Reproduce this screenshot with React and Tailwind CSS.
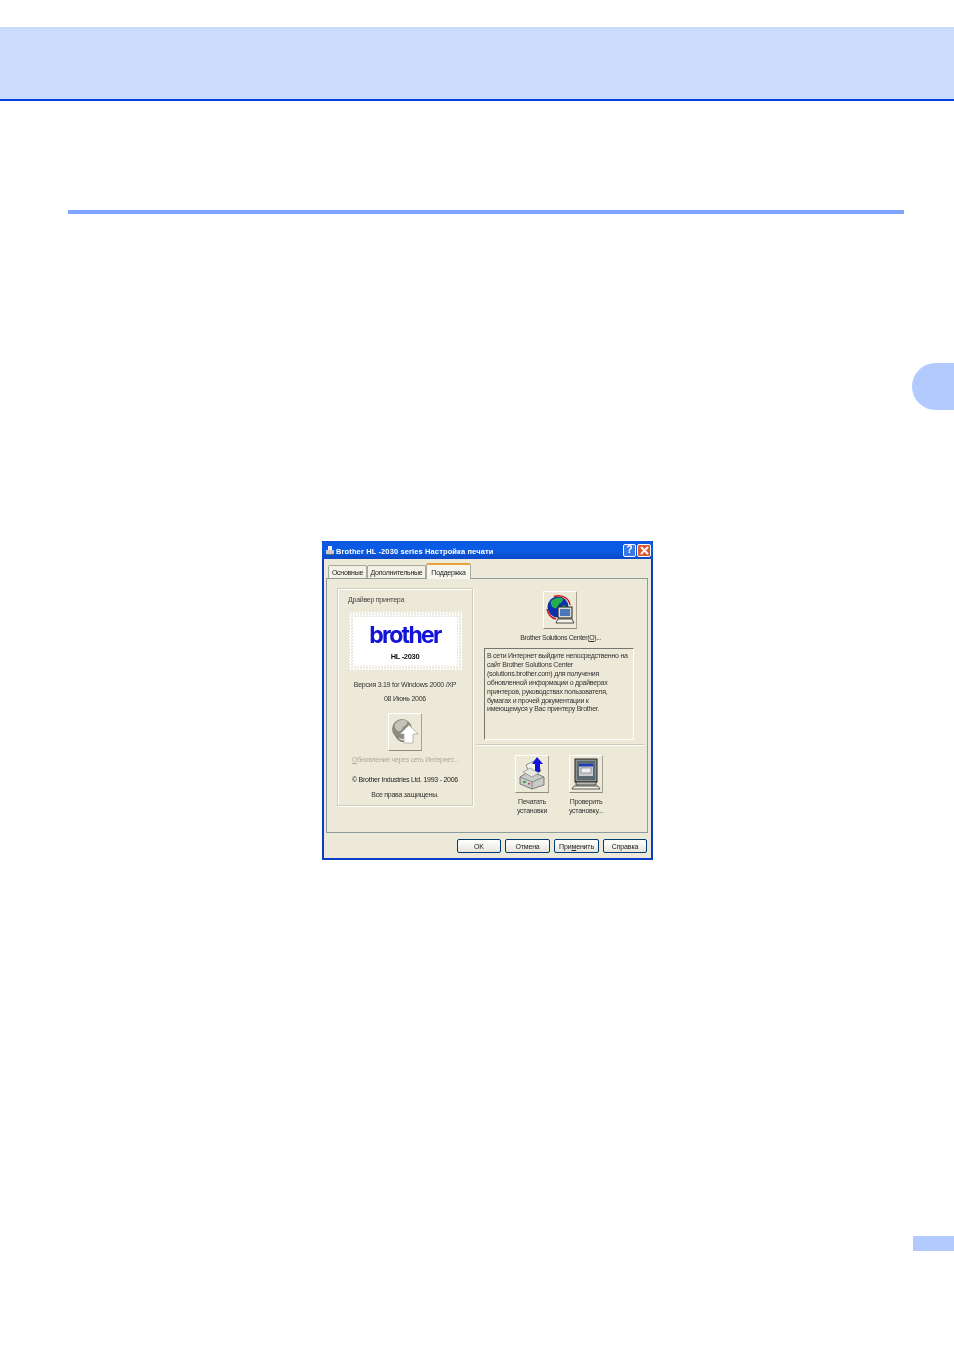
const FONT = "font-['Liberation_Sans',Arial,sans-serif]";

function IconButton({ children, className = "" }) {
  return (
    <div className={`flex h-[38px] w-[34px] items-center justify-center border border-t-white border-l-white border-r-[#a5a294] border-b-[#8f8c7e] bg-[#ece9d8] ${className}`}>
      {children}
    </div>
  );
}

function GlobeIcon() {
  return (
    <svg width="30" height="32" viewBox="0 0 30 32">
      <circle cx="13" cy="13" r="10.5" fill="#0f2fb0" />
      <path d="M6 7c3-3 7-4 11-3 2 2 0 5-3 6-1 3-3 5-5 4-2-1-4-4-3-7z" fill="#22b04a" />
      <path d="M17 12c3-1 5 0 6 2-1 3-3 5-5 6-2-2-2-5-1-8z" fill="#22b04a" />
      <path d="M9 2.5C16 0 24 4 25 11M2 15c1 5 4 9 9 10" fill="none" stroke="#d01818" strokeWidth="1.4" />
      <rect x="13" y="13" width="14" height="11" fill="#dcdcd0" stroke="#222" />
      <rect x="15" y="15" width="10" height="7" fill="#4a78b8" />
      <path d="M13 25h14l2 4H11z" fill="#f4f4ea" stroke="#222" strokeWidth="0.8" />
    </svg>
  );
}

function FadedGlobeIcon() {
  return (
    <svg width="30" height="32" viewBox="0 0 30 32">
      <circle cx="12" cy="13" r="10" fill="#8d8c83" />
      <path d="M5 8c3-4 8-5 12-3 1 3-2 5-4 6-1 3-3 5-5 4-2-1-4-4-3-7z" fill="#c5c4ba" />
      <path d="M6 20c2 4 6 6 10 5" fill="none" stroke="#77766d" strokeWidth="1.5" />
      <path d="M19 9l9 9h-5v9h-9v-9H10z" fill="#fff" stroke="#a5a294" strokeWidth="0.7" />
    </svg>
  );
}

function PrinterIcon() {
  return (
    <svg width="30" height="34" viewBox="0 0 30 34">
      <path d="M9 8l10-5 5 11-10 5z" fill="#f4f4ee" stroke="#666" strokeWidth="0.7" />
      <path d="M20 0l6 7h-3v8h-5V7h-3z" fill="#1414d8" />
      <path d="M3 20l10-6 14 6v8l-12 4-12-5z" fill="#c9cbc8" stroke="#555" strokeWidth="0.7" />
      <path d="M3 20l12 5 12-5M15 25v7" fill="none" stroke="#77797a" strokeWidth="0.8" />
      <path d="M6 15l7-4 9 5-7 4z" fill="#e8e8e2" stroke="#777" strokeWidth="0.6" />
      <rect x="6" y="24" width="3" height="2" fill="#22c040" />
      <rect x="11" y="26" width="2" height="1.5" fill="#d04040" />
    </svg>
  );
}

function MonitorIcon() {
  return (
    <svg width="30" height="34" viewBox="0 0 30 34">
      <rect x="4" y="2" width="22" height="23" fill="#8c8f8c" stroke="#222" />
      <rect x="6" y="4" width="18" height="19" fill="#5a6a74" />
      <rect x="8" y="7" width="14" height="12" fill="#c9ccd0" />
      <rect x="8" y="7" width="14" height="2.5" fill="#1c3cb8" />
      <rect x="10" y="11" width="10" height="5" fill="#eeeeee" stroke="#555" strokeWidth="0.5" />
      <rect x="5" y="25" width="20" height="3" fill="#b9bab2" stroke="#222" strokeWidth="0.7" />
      <path d="M3 29h24l2 3H1z" fill="#f0f0e6" stroke="#222" strokeWidth="0.7" />
    </svg>
  );
}

function DialogButton({ children, className }) {
  return (
    <div className={`flex h-[14px] items-center justify-center rounded-[2px] border border-[#003c74] bg-gradient-to-b from-white to-[#e8e6dc] text-[7px] leading-none tracking-[-0.15px] text-[#222] ${className}`}>
      {children}
    </div>
  );
}

function Dialog() {
  return (
    <div className={`ml-[322px] flex h-[319px] w-[331px] flex-col border-2 border-t-0 border-[#0a3cc8] bg-[#ece9d8] text-[#222] blur-[0.3px] ${FONT}`}>
      <div className="-mx-[2px] flex h-[18px] shrink-0 items-center rounded-t-[3px] bg-gradient-to-b from-[#0a58e0] via-[#0a5ce6] to-[#0b49c8] pl-[3px] pr-[2px]">
        <svg width="10" height="11" viewBox="0 0 10 11" className="mr-[1px]">
          <path d="M3 1h4v4H3z" fill="#f2f2f2" />
          <path d="M1 5h8v4H1z" fill="#c8c8c8" />
          <path d="M2 9h6v1H2z" fill="#666" />
        </svg>
        <span className="pt-[3px] text-[7.5px] font-bold leading-none tracking-[0.12px] text-white">Brother HL -2030 series Настройка печати</span>
        <div className="ml-auto flex gap-[1px]">
          <div className="flex h-[13px] w-[13px] items-center justify-center rounded-[2px] border border-white bg-[#3a78e8] text-[10px] font-bold leading-none text-white">?</div>
          <div className="flex h-[13px] w-[14px] items-center justify-center rounded-[2px] border border-white bg-[#dc5a38]">
            <svg width="9" height="9" viewBox="0 0 9 9"><path d="M1 1l7 7M8 1L1 8" stroke="#fff" strokeWidth="1.8" /></svg>
          </div>
        </div>
      </div>

      <div className="mt-[2px] flex h-[17px] shrink-0 items-end pl-[4px] text-[7px] leading-none tracking-[-0.25px]">
        <div className="flex h-[13px] w-[39px] items-center justify-center rounded-t-[2px] border border-b-0 border-[#a9a99c] bg-[#f3f1e6]">Основные</div>
        <div className="flex h-[13px] w-[59px] items-center justify-center rounded-t-[2px] border border-b-0 border-[#a9a99c] bg-[#f3f1e6]">Дополнительные</div>
        <div className="z-10 -mb-[1px] flex h-[16px] w-[45px] items-center justify-center rounded-t-[2px] border border-t-2 border-b-0 border-[#a9a99c] border-t-[#e8a33c] bg-[#f7f6ee]">Поддержка</div>
      </div>

      <div className="ml-[2px] mr-[3px] flex h-[255px] shrink-0 border border-[#8f9a9c] bg-[#ece9d8] pl-[10px] pr-[3px] pt-[9px]">
        <div className="flex h-[218px] w-[136px] shrink-0 flex-col items-center border border-[#cfcdbc] text-[7px] leading-[8px] tracking-[-0.25px] shadow-[inset_1px_1px_0_#fff,1px_1px_0_#fff]">
          <div className="mt-[7px] w-full pl-[10px] text-[#444]">Драйвер принтера</div>
          <div className="mt-[8px] h-[58px] w-[113px] bg-[repeating-conic-gradient(#fff_0_25%,#e8e6d8_0_50%)] bg-[length:3px_3px] p-[5px]">
            <div className="flex h-full flex-col items-center bg-white">
              <div className="mt-[6px] font-['Inter',sans-serif] text-[23px] font-bold leading-[25px] tracking-[-1.7px] text-[#1414d8]">brother</div>
              <div className="mt-[5px] text-[7.5px] font-bold leading-none tracking-[-0.3px] text-[#111]">HL -2030</div>
            </div>
          </div>
          <div className="mt-[11px] whitespace-nowrap text-[#333]">Версия 3.19 for Windows 2000 /XP</div>
          <div className="mt-[6px] text-[#333]">08 Июнь 2006</div>
          <IconButton className="mt-[10px]"><FadedGlobeIcon /></IconButton>
          <div className="mt-[5px] whitespace-nowrap text-[#adab9c]"><span className="underline">О</span>бновление через сеть Интернет...</div>
          <div className="mt-[12px] whitespace-nowrap text-[#222]">© Brother Industries Ltd. 1993 - 2006</div>
          <div className="mt-[7px] text-[#333]">Все права защищены.</div>
        </div>

        <div className="ml-[4px] flex min-w-0 flex-1 flex-col items-center">
          <IconButton className="mt-[3px] -translate-x-[1px]"><GlobeIcon /></IconButton>
          <div className="mt-[5px] text-[7px] leading-[8px] tracking-[-0.4px] text-[#333]">Brother Solutions Center(<span className="underline">O</span>)...</div>
          <div className="ml-[7px] mr-auto mt-[6px] h-[92px] w-[150px] whitespace-nowrap border border-t-[#77766c] border-l-[#77766c] border-r-white border-b-white pl-[2px] pt-[3px] text-[7px] leading-[8.9px] tracking-[-0.25px] text-[#333]">
            <div>В сети Интернет выйдите непосредственно на</div>
            <div>сайт Brother Solutions Center</div>
            <div>(solutions.brother.com) для получения</div>
            <div>обновленной информации о драйверах</div>
            <div>принтеров, руководствах пользователя,</div>
            <div>бумагах и прочей документации к</div>
            <div>имеющемуся у Вас принтеру Brother.</div>
          </div>
          <div className="mt-[4px] h-[2px] w-full border-t border-b border-t-[#c9c7b6] border-b-white" />
          <div className="mt-[9px] flex w-full gap-[20px] pl-[38px]">
            <div className="flex w-[34px] flex-col items-center">
              <IconButton><PrinterIcon /></IconButton>
              <div className="mt-[4px] whitespace-nowrap text-center text-[7px] leading-[9px] tracking-[-0.25px] text-[#333]">Печатать<br />установки</div>
            </div>
            <div className="flex w-[34px] flex-col items-center">
              <IconButton><MonitorIcon /></IconButton>
              <div className="mt-[4px] whitespace-nowrap text-center text-[7px] leading-[9px] tracking-[-0.25px] text-[#333]">Проверить<br />установку...</div>
            </div>
          </div>
        </div>
      </div>

      <div className="mt-[6px] flex gap-[4px] self-end pr-[4px]">
        <DialogButton className="w-[44px]">OK</DialogButton>
        <DialogButton className="w-[45px]">Отмена</DialogButton>
        <DialogButton className="w-[45px]">При<span className="underline">м</span>енить</DialogButton>
        <DialogButton className="w-[44px]">Справка</DialogButton>
      </div>
    </div>
  );
}

export default function App() {
  return (
    <div className="flex h-[1350px] w-[954px] flex-col overflow-hidden bg-white pt-[27px]">
      <div className="h-[74px] shrink-0 border-b-2 border-[#0040e0] bg-[#ccdcff]" />
      <div className="mx-[68px] mt-[109px] h-[4px] w-[836px] shrink-0 bg-[#7fa5ff]" />
      <div className="ml-auto mt-[149px] h-[47px] w-[42px] shrink-0 rounded-l-[24px] bg-[#b3caff]" />
      <div className="mt-[131px] shrink-0"><Dialog /></div>
      <div className="ml-auto mt-[376px] h-[15px] w-[41px] shrink-0 bg-[#b3caff]" />
    </div>
  );
}
